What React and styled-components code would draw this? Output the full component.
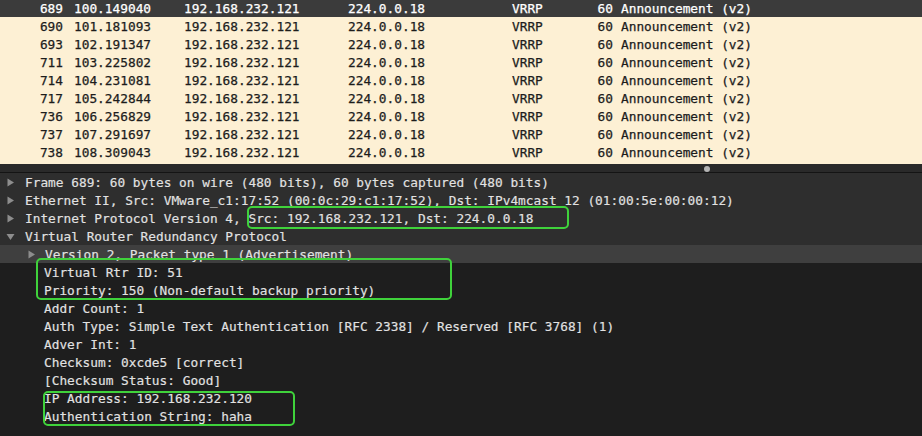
import styled, { createGlobalStyle } from 'styled-components'

const GlobalStyle = createGlobalStyle`
    html, body {
        margin: 0;
        padding: 0;
        background: #1e1e1e;
    }
`;

const packets = [
    ['689', '100.149040'],
    ['690', '101.181093'],
    ['693', '102.191347'],
    ['711', '103.225802'],
    ['714', '104.231081'],
    ['717', '105.242844'],
    ['736', '106.256829'],
    ['737', '107.291697'],
    ['738', '108.309043'],
];

const topItems = [
    {text: 'Frame 689: 60 bytes on wire (480 bits), 60 bytes captured (480 bits)', open: false},
    {text: 'Ethernet II, Src: VMware_c1:17:52 (00:0c:29:c1:17:52), Dst: IPv4mcast_12 (01:00:5e:00:00:12)', open: false},
    {text: 'Internet Protocol Version 4, Src: 192.168.232.121, Dst: 224.0.0.18', open: false},
    {text: 'Virtual Router Redundancy Protocol', open: true},
];

const vrrpFields = [
    'Virtual Rtr ID: 51',
    'Priority: 150 (Non-default backup priority)',
    'Addr Count: 1',
    'Auth Type: Simple Text Authentication [RFC 2338] / Reserved [RFC 3768] (1)',
    'Adver Int: 1',
    'Checksum: 0xcde5 [correct]',
    '[Checksum Status: Good]',
    'IP Address: 192.168.232.120',
    'Authentication String: haha',
];

const Arrow = ({open}) => (
    <ArrowBox>
        {open ? (
            <svg width="9" height="9" viewBox="0 0 9 9">
                <path d="M0.5 2 L8.5 2 L4.5 8 Z" fill="#8d8d8d" />
            </svg>
        ) : (
            <svg width="9" height="9" viewBox="0 0 9 9">
                <path d="M1.5 0.5 L8 4.5 L1.5 8.5 Z" fill="#8d8d8d" />
            </svg>
        )}
    </ArrowBox>
)

const App = () => {
    return (
        <Screen>
            <GlobalStyle />
            <PacketList>
                {packets.map(([no, time], i) => (
                    <PacketRow key={no} selected={i === 0}>
                        <NoCell>{no}</NoCell>
                        <TimeCell>{time}</TimeCell>
                        <AddrCell>192.168.232.121</AddrCell>
                        <AddrCell>224.0.0.18</AddrCell>
                        <ProtoCell>VRRP</ProtoCell>
                        <LenCell>60</LenCell>
                        <InfoCell>Announcement (v2)</InfoCell>
                    </PacketRow>
                ))}
            </PacketList>

            <Splitter>
                <Handle />
            </Splitter>

            <Details>
                <TopSection>
                    {topItems.map((item) => (
                        <TreeRow key={item.text}>
                            <Arrow open={item.open} />
                            <Label>{item.text}</Label>
                        </TreeRow>
                    ))}
                </TopSection>
                <TreeRow level={1} highlight>
                    <Arrow open={false} />
                    <Label level={1}>Version 2, Packet type 1 (Advertisement)</Label>
                </TreeRow>
                <Fields>
                    {vrrpFields.map((f) => (
                        <TreeRow key={f} leaf>
                            <Label leaf>{f}</Label>
                        </TreeRow>
                    ))}
                </Fields>

                <Mark style={{left: 247, top: 33, width: 322, height: 23}} />
                <Mark style={{left: 36, top: 85, width: 416, height: 42}} />
                <Mark style={{left: 43, top: 218, width: 252, height: 35}} />
            </Details>
        </Screen>
    )
}

export default App

const Screen = styled.div`
    width: 922px;
    height: 436px;
    overflow: hidden;
    display: flex;
    flex-direction: column;
    font-family: "DejaVu Sans Mono", "Liberation Mono", monospace;
    font-size: 12.8px;
`;

const PacketList = styled.div`
    height: 164px;
    flex: none;
    background: #fdf0d4;
    overflow: hidden;

    > div:first-child {
        margin-top: -1px;
    }
`;

const PacketRow = styled.div`
    display: flex;
    height: 18px;
    align-items: center;
    white-space: pre;
    background: ${p => p.selected ? '#3b3b3b' : 'transparent'};
    color: ${p => p.selected ? '#ffffff' : '#1c1c1c'};
    -webkit-text-stroke: 0.25px ${p => p.selected ? '#ffffff' : '#1c1c1c'};
`;

const NoCell = styled.span`
    width: 63px;
    text-align: right;
`;

const TimeCell = styled.span`
    width: 110px;
    padding-left: 11px;
`;

const AddrCell = styled.span`
    width: 164px;
`;

const ProtoCell = styled.span`
    width: 64px;
`;

const LenCell = styled.span`
    width: 37px;
    text-align: right;
`;

const InfoCell = styled.span`
    padding-left: 8px;
`;

const Splitter = styled.div`
    flex: none;
    height: 8px;
    background: #2a2a2a;
    border-bottom: 1px solid #141414;
    position: relative;
`;

const Handle = styled.div`
    position: absolute;
    left: 704px;
    top: 2px;
    width: 6px;
    height: 6px;
    border-radius: 50%;
    background: #b4b4b4;
`;

const Details = styled.div`
    flex: 1;
    position: relative;
    background: #1e1e1e;
    color: #e2e2e2;
    -webkit-text-stroke: 0.15px #e2e2e2;
`;

const TopSection = styled.div`
    background: #2e2e2e;
`;

const Fields = styled.div``;

const TreeRow = styled.div`
    display: flex;
    align-items: center;
    height: 18px;
    white-space: pre;
    padding-left: ${p => p.leaf ? 44 : 6 + (p.level || 0) * 21}px;
    background: ${p => p.highlight ? '#3f3f3f' : 'transparent'};
`;

const Label = styled.span`
    margin-left: ${p => p.leaf ? 0 : p.level ? 9 : 10}px;
`;

const ArrowBox = styled.span`
    display: inline-flex;
    width: 9px;
    height: 9px;
`;

const Mark = styled.div`
    position: absolute;
    box-sizing: border-box;
    border: 2.5px solid #3fd23b;
    border-radius: 5px;
    pointer-events: none;
`;
